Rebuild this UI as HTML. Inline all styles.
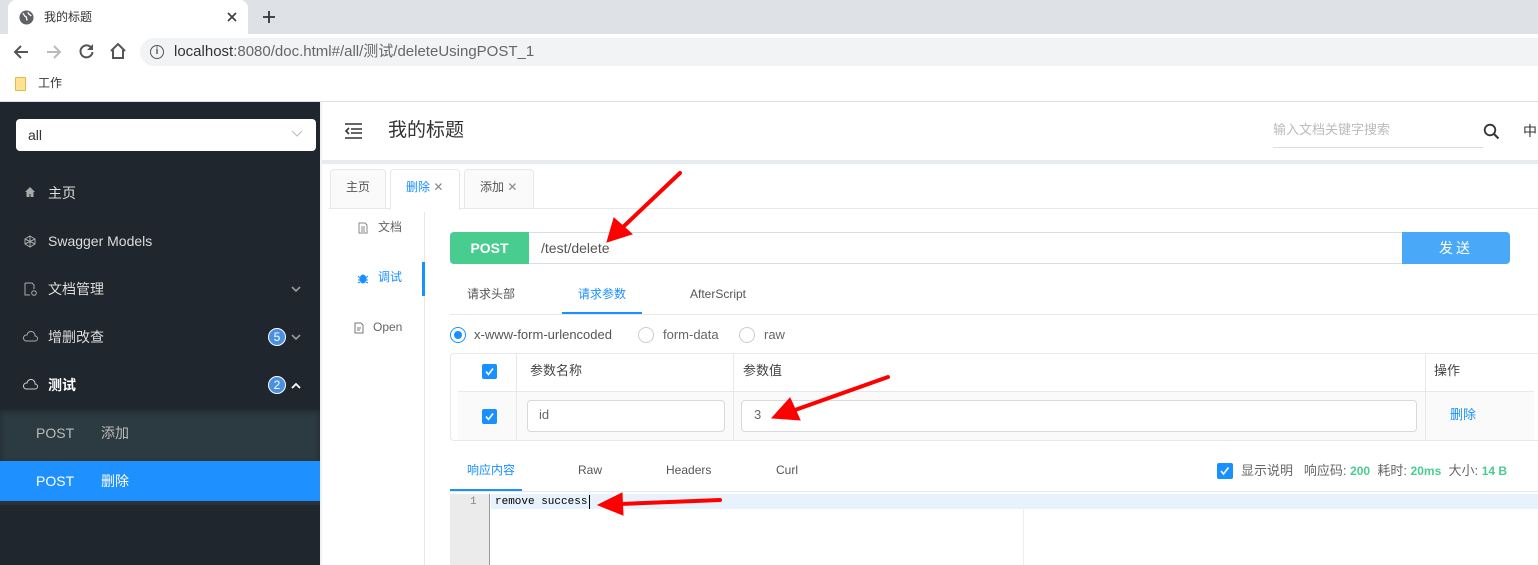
<!DOCTYPE html>
<html><head><meta charset="utf-8"><style>
*{box-sizing:border-box;margin:0;padding:0}
body{width:1538px;height:565px;overflow:hidden;position:relative;font-family:"Liberation Sans","Noto Sans CJK SC",sans-serif;font-size:13px;color:#333;background:#fff}
.a{position:absolute}
.t{white-space:nowrap;line-height:1.15}
.cb{position:absolute;width:15px;height:15px;background:#1890ff;border-radius:2px}
</style></head><body>
<!-- chrome -->
<div class="a" style="left:0;top:0;width:1538px;height:34px;background:#dee1e6"></div>
<div class="a" style="left:8px;top:0;width:240px;height:36px;background:#fff;border-radius:8px 8px 0 0"></div>
<svg class="a" style="left:19px;top:10px" width="15" height="15" viewBox="0 0 16 16"><circle cx="8" cy="8" r="7.5" fill="#5f6368"/><path d="M4 3.5c2 1 1 3 3 3.5s0 3 2 4M10 2.5c-1 2 2 2 3 4" stroke="#fff" stroke-width="1.4" fill="none"/></svg>
<div class="a t" style="left:44px;top:11px;font-size:12px;color:#333">我的标题</div>
<svg class="a" style="left:227px;top:12px" width="10" height="10"><path d="M1 1l8 8M9 1l-8 8" stroke="#444" stroke-width="1.8"/></svg>
<svg class="a" style="left:262px;top:10px" width="14" height="14"><path d="M7 1v12M1 7h12" stroke="#333" stroke-width="1.8"/></svg>
<svg class="a" style="left:13px;top:44px" width="16" height="16"><path d="M15 8H2M8 2L2 8l6 6" stroke="#555" stroke-width="2" fill="none"/></svg>
<svg class="a" style="left:46px;top:44px" width="16" height="16"><path d="M1 8h13M8 2l6 6-6 6" stroke="#bbb" stroke-width="2" fill="none"/></svg>
<svg class="a" style="left:78px;top:43px" width="17" height="17" viewBox="0 0 17 17"><path d="M13.5 5A6 6 0 1 0 14.5 9" stroke="#555" stroke-width="2" fill="none"/><path d="M15 1v6H9z" fill="#555"/></svg>
<svg class="a" style="left:109px;top:42px" width="18" height="18" viewBox="0 0 18 18"><path d="M2 9L9 2l7 7M4 8v8h10V8" stroke="#555" stroke-width="2" fill="none"/></svg>
<div class="a" style="left:140px;top:38px;width:1410px;height:28px;background:#f1f3f4;border-radius:14px"></div>
<div class="a" style="left:150px;top:45px;width:14px;height:14px;border:1.6px solid #555;border-radius:50%;font-size:10px;text-align:center;line-height:11px;font-weight:bold;color:#555">i</div>
<div class="a t" style="left:174px;top:43px;font-size:15px;color:#333">localhost<span style="color:#666">:8080/doc.html#/all/测试/deleteUsingPOST_1</span></div>
<div class="a" style="left:15px;top:77px;width:11px;height:14px;background:#fde293;border:1px solid #e5b84a;border-radius:1px"></div>
<div class="a t" style="left:38px;top:77px;font-size:12px;color:#333">工作</div>
<div class="a" style="left:0;top:101px;width:1538px;height:1px;background:#ddd"></div>
<!-- sidebar -->
<div class="a" style="left:0;top:102px;width:320px;height:463px;background:#1f262d"></div>
<div class="a" style="left:16px;top:119px;width:300px;height:32px;background:#fff;border-radius:4px"></div>
<div class="a t" style="left:28px;top:127px;font-size:14px;color:#333">all</div>
<svg class="a" style="left:291px;top:130px" width="12" height="8"><path d="M1 1l5 5 5-5" stroke="#bbb" fill="none"/></svg>
<svg class="a" style="left:24px;top:186px" width="12" height="12" viewBox="0 0 12 12"><path d="M6 1L1 6h1.5v5h3V8h1v3h3V6H11z" fill="#aaa"/></svg>
<div class="a t" style="left:48px;top:185px;font-size:14px;color:#ddd">主页</div>
<svg class="a" style="left:24px;top:235px" width="12" height="13" viewBox="0 0 12 13"><path d="M6 1l5 3v5l-5 3-5-3V4z M6 1v11M1 4l10 5M11 4L1 9" stroke="#aaa" fill="none"/></svg>
<div class="a t" style="left:48px;top:233px;font-size:14px;color:#ddd">Swagger Models</div>
<svg class="a" style="left:24px;top:282px" width="13" height="14" viewBox="0 0 13 14"><path d="M1 1h7l2 2v4M1 1v12h5" stroke="#aaa" fill="none"/><circle cx="10" cy="11" r="2.3" stroke="#aaa" fill="none"/></svg>
<div class="a t" style="left:48px;top:281px;font-size:14px;color:#ddd">文档管理</div>
<svg class="a" style="left:291px;top:286px" width="10" height="7"><path d="M1 1l4 4 4-4" stroke="#999" stroke-width="1.6" fill="none"/></svg>
<svg class="a" style="left:23px;top:331px" width="15" height="11" viewBox="0 0 15 11"><path d="M3 10h9a2.5 2.5 0 0 0 0-5 4 4 0 0 0-8-1 3 3 0 0 0-1 6z" stroke="#aaa" fill="none"/></svg>
<div class="a t" style="left:48px;top:329px;font-size:14px;color:#ddd">增删改查</div>
<div class="a" style="left:268px;top:328px;width:18px;height:18px;border-radius:50%;background:#4a90e2;border:1px solid #fff;color:#fff;font-size:12px;text-align:center;line-height:16px">5</div>
<svg class="a" style="left:291px;top:334px" width="10" height="7"><path d="M1 1l4 4 4-4" stroke="#999" stroke-width="1.6" fill="none"/></svg>
<svg class="a" style="left:23px;top:379px" width="15" height="11" viewBox="0 0 15 11"><path d="M3 10h9a2.5 2.5 0 0 0 0-5 4 4 0 0 0-8-1 3 3 0 0 0-1 6z" stroke="#ccc" fill="none"/></svg>
<div class="a t" style="left:48px;top:377px;font-size:14px;color:#fff;font-weight:bold">测试</div>
<div class="a" style="left:268px;top:376px;width:18px;height:18px;border-radius:50%;background:#4a90e2;border:1px solid #fff;color:#fff;font-size:12px;text-align:center;line-height:16px">2</div>
<svg class="a" style="left:291px;top:382px" width="10" height="7"><path d="M1 6l4-4 4 4" stroke="#fff" stroke-width="1.8" fill="none"/></svg>
<div class="a" style="left:0;top:409px;width:320px;height:52px;background:#2c3a41;box-shadow:inset 0 3px 6px rgba(0,0,0,.3)"></div>
<div class="a t" style="left:36px;top:425px;font-size:14px;color:#bbb">POST</div>
<div class="a t" style="left:101px;top:425px;font-size:14px;color:#bbb">添加</div>
<div class="a" style="left:0;top:461px;width:320px;height:40px;background:#1e90ff"></div>
<div class="a t" style="left:36px;top:473px;font-size:14px;color:#fff">POST</div>
<div class="a t" style="left:101px;top:473px;font-size:14px;color:#fff">删除</div>
<div class="a" style="left:0;top:501px;width:320px;height:4px;background:#2a3137"></div>
<!-- header -->
<svg class="a" style="left:344px;top:123px" width="19" height="16" viewBox="0 0 19 16"><path d="M1 1h17M7 6h11M7 10h11M1 15h17M5 5L2 8l3 3" stroke="#333" stroke-width="1.6" fill="none"/></svg>
<div class="a t" style="left:388px;top:120px;font-size:19px;color:#333">我的标题</div>
<div class="a t" style="left:1273px;top:123px;font-size:13px;color:#bbb">输入文档关键字搜索</div>
<div class="a" style="left:1273px;top:147px;width:210px;height:1px;background:#ddd"></div>
<svg class="a" style="left:1483px;top:123px" width="17" height="17" viewBox="0 0 17 17"><circle cx="7" cy="7" r="5.3" stroke="#333" stroke-width="1.8" fill="none"/><path d="M11 11l4.5 4.5" stroke="#333" stroke-width="2"/></svg>
<div class="a t" style="left:1523px;top:123px;font-size:14px;color:#333">中</div>
<div class="a" style="left:320px;top:160px;width:1218px;height:4px;background:#e8ebee"></div>
<div class="a" style="left:320px;top:102px;width:2px;height:463px;background:#f0f2f4"></div>
<!-- tabs -->
<div class="a" style="left:329px;top:208px;width:1209px;height:1px;background:#e8e8e8"></div>
<div class="a" style="left:330px;top:169px;width:56px;height:40px;background:#fafafa;border:1px solid #e8e8e8;border-radius:4px 4px 0 0"></div>
<div class="a t" style="left:346px;top:181px;font-size:12px;color:#555">主页</div>
<div class="a" style="left:390px;top:169px;width:70px;height:41px;background:#fff;border:1px solid #e8e8e8;border-bottom:none;border-radius:4px 4px 0 0"></div>
<div class="a t" style="left:406px;top:181px;font-size:12px;color:#1890ff">删除 <span style="color:#888">✕</span></div>
<div class="a" style="left:464px;top:169px;width:70px;height:40px;background:#fafafa;border:1px solid #e8e8e8;border-radius:4px 4px 0 0"></div>
<div class="a t" style="left:480px;top:181px;font-size:12px;color:#555">添加 <span style="color:#888">✕</span></div>
<!-- sub nav -->
<div class="a" style="left:424px;top:212px;width:1px;height:353px;background:#e8e8e8"></div>
<div class="a" style="left:422px;top:262px;width:3px;height:34px;background:#1890ff"></div>
<svg class="a" style="left:358px;top:222px" width="10" height="12"><path d="M1 1h6l2 2v8H1z M3 5h4M3 7h4M3 9h4" stroke="#888" fill="none"/></svg>
<div class="a t" style="left:378px;top:221px;font-size:12px;color:#666">文档</div>
<svg class="a" style="left:357px;top:272px" width="12" height="12"><ellipse cx="6" cy="7" rx="3.5" ry="4.5" fill="#1890ff"/><path d="M1 4l2 2M11 4l-2 2M1 8h2M9 8h2M1 11l2-1M11 11l-2-1" stroke="#1890ff"/></svg>
<div class="a t" style="left:378px;top:271px;font-size:12px;color:#1890ff">调试</div>
<svg class="a" style="left:354px;top:322px" width="10" height="12"><path d="M1 1h6l2 2v8H1z M3 6h4M3 8h3" stroke="#777" fill="none"/></svg>
<div class="a t" style="left:373px;top:321px;font-size:12px;color:#666">Open</div>
<!-- url row -->
<div class="a" style="left:450px;top:232px;width:1060px;height:32px;border:1px solid #ddd;border-radius:4px;background:#fff"></div>
<div class="a" style="left:450px;top:232px;width:79px;height:32px;background:#49cc90;border-radius:4px 0 0 4px;color:#fff;font-weight:bold;font-size:14px;text-align:center;line-height:32px">POST</div>
<div class="a t" style="left:541px;top:240px;font-size:14px;color:#555">/test/delete</div>
<div class="a" style="left:1402px;top:232px;width:108px;height:32px;background:#49a9f8;border-radius:0 4px 4px 0;color:#fff;font-size:14px;text-align:center;line-height:32px;letter-spacing:3px">发送</div>
<!-- param tabs -->
<div class="a t" style="left:467px;top:288px;font-size:12px;color:#555">请求头部</div>
<div class="a t" style="left:578px;top:288px;font-size:12px;color:#1890ff">请求参数</div>
<div class="a t" style="left:690px;top:288px;font-size:12px;color:#555">AfterScript</div>
<div class="a" style="left:450px;top:314px;width:1088px;height:1px;background:#e8e8e8"></div>
<div class="a" style="left:562px;top:312px;width:80px;height:2px;background:#1890ff"></div>
<div class="a" style="left:450px;top:327px;width:16px;height:16px;border:1px solid #1890ff;border-radius:50%"></div>
<div class="a" style="left:454px;top:331px;width:8px;height:8px;background:#1890ff;border-radius:50%"></div>
<div class="a t" style="left:474px;top:328px;font-size:13px;color:#555">x-www-form-urlencoded</div>
<div class="a" style="left:638px;top:327px;width:16px;height:16px;border:1px solid #ccc;border-radius:50%"></div>
<div class="a t" style="left:663px;top:328px;font-size:13px;color:#666">form-data</div>
<div class="a" style="left:739px;top:327px;width:16px;height:16px;border:1px solid #ccc;border-radius:50%"></div>
<div class="a t" style="left:764px;top:328px;font-size:13px;color:#666">raw</div>
<!-- table -->
<div class="a" style="left:450px;top:353px;width:1100px;height:88px;border:1px solid #e8e8e8;border-radius:4px"></div>
<div class="a" style="left:458px;top:391px;width:1076px;height:49px;background:#fafafa;border-top:1px solid #e8e8e8"></div>
<div class="a" style="left:516px;top:354px;width:1px;height:86px;background:#e8e8e8"></div>
<div class="a" style="left:733px;top:354px;width:1px;height:86px;background:#e8e8e8"></div>
<div class="a" style="left:1425px;top:354px;width:1px;height:86px;background:#e8e8e8"></div>
<div class="cb" style="left:482px;top:364px"><svg width="15" height="15"><path d="M4 7.5l2.5 3 4.5-6" stroke="#fff" stroke-width="1.6" fill="none"/></svg></div>
<div class="cb" style="left:482px;top:409px"><svg width="15" height="15"><path d="M4 7.5l2.5 3 4.5-6" stroke="#fff" stroke-width="1.6" fill="none"/></svg></div>
<div class="a t" style="left:530px;top:364px;font-size:13px;color:#444">参数名称</div>
<div class="a t" style="left:743px;top:364px;font-size:13px;color:#444">参数值</div>
<div class="a t" style="left:1434px;top:364px;font-size:13px;color:#444">操作</div>
<div class="a" style="left:527px;top:400px;width:198px;height:32px;border:1px solid #d9d9d9;border-radius:4px;background:#fff"></div>
<div class="a t" style="left:539px;top:408px;font-size:13px;color:#666">id</div>
<div class="a" style="left:741px;top:400px;width:676px;height:32px;border:1px solid #d9d9d9;border-radius:4px;background:#fff"></div>
<div class="a t" style="left:754px;top:408px;font-size:13px;color:#666">3</div>
<div class="a t" style="left:1450px;top:408px;font-size:13px;color:#1890ff">删除</div>
<!-- response -->
<div class="a t" style="left:467px;top:464px;font-size:12px;color:#1890ff">响应内容</div>
<div class="a t" style="left:578px;top:464px;font-size:12px;color:#555">Raw</div>
<div class="a t" style="left:666px;top:464px;font-size:12px;color:#555">Headers</div>
<div class="a t" style="left:776px;top:464px;font-size:12px;color:#555">Curl</div>
<div class="a" style="left:450px;top:491px;width:1088px;height:1px;background:#e8e8e8"></div>
<div class="a" style="left:450px;top:489px;width:72px;height:2px;background:#1890ff"></div>
<div class="cb" style="left:1217px;top:463px;width:16px;height:16px"><svg width="16" height="16"><path d="M4 8l2.5 3 5-6.5" stroke="#fff" stroke-width="1.6" fill="none"/></svg></div>
<div class="a t" style="left:1241px;top:464px;font-size:13px;color:#666">显示说明 &nbsp; 响应码: <b style="color:#49cc90;font-size:12px">200</b> &nbsp;耗时: <b style="color:#49cc90;font-size:12px">20ms</b> &nbsp;大小: <b style="color:#49cc90;font-size:12px">14 B</b></div>
<div class="a" style="left:450px;top:494px;width:40px;height:71px;background:#ebebeb;border-right:1px solid #999"></div>
<div class="a" style="left:491px;top:494px;width:1047px;height:15px;background:#e8f2fc"></div>
<div class="a t" style="left:470px;top:496px;font-size:11px;color:#888;font-family:'Liberation Mono',monospace">1</div>
<div class="a t" style="left:495px;top:496px;font-size:11px;color:#000;font-family:'Liberation Mono',monospace">remove success</div>
<div class="a" style="left:589px;top:495px;width:1px;height:14px;background:#000"></div>
<div class="a" style="left:1023px;top:509px;width:1px;height:56px;background:#eee"></div>
<!-- arrows -->
<svg class="a" style="left:0;top:0" width="1538" height="565">
<g stroke="#f00" stroke-width="4" fill="#f00" stroke-linecap="round">
<line x1="680" y1="173" x2="622" y2="228"/><polygon points="607,242 614,218 632,234" stroke-width="1"/>
<line x1="888" y1="377" x2="795" y2="410"/><polygon points="772,418 790,398 800,420" stroke-width="1"/>
<line x1="720" y1="500" x2="620" y2="504"/><polygon points="598,505 622,493 623,515" stroke-width="1"/>
</g></svg>
</body></html>
